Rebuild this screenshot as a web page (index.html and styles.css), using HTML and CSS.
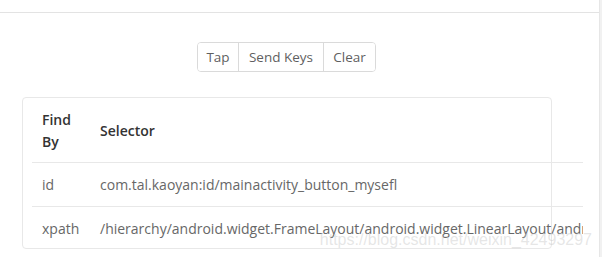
FILE: index.html
```html
<!DOCTYPE html>
<html>
<head>
<meta charset="utf-8">
<link rel="stylesheet" href="styles.css">
</head>
<body>
<div class="page">
  <div class="main">
    <div class="topbar"></div>
    <div class="actions">
      <div class="btn-group">
        <button class="btn btn-tap">Tap</button>
        <button class="btn btn-keys">Send Keys</button>
        <button class="btn btn-clear">Clear</button>
      </div>
    </div>
    <div class="card">
      <div class="table-wrap">
        <table class="sel-table">
          <thead>
            <tr><th class="col-by">Find By</th><th>Selector</th></tr>
          </thead>
          <tbody>
            <tr><td class="col-by">id</td><td>com.tal.kaoyan:id/mainactivity_button_mysefl</td></tr>
            <tr><td class="col-by">xpath</td><td>/hierarchy/android.widget.FrameLayout/android.widget.LinearLayout/android.widget.FrameLayout</td></tr>
          </tbody>
        </table>
      </div>
    </div>
    <div class="watermark">https://blog.csdn.net/weixin_42493297</div>
  </div>
  <div class="scroll-strip"></div>
</div>
</body>
</html>
```
FILE: styles.css
```css
html, body {
  margin: 0;
  padding: 0;
  background: #fff;
}
body {
  font-family: "Open Sans", "Noto Sans", sans-serif;
  color: #555;
  width: 602px;
  height: 257px;
  overflow: hidden;
}
.page {
  display: flex;
  height: 257px;
}
.main {
  position: relative;
  width: 599px;
  flex: none;
  overflow: hidden;
}
.scroll-strip {
  flex: 1;
  background: #f1f1f1;
  border-left: 1px solid #e6e6e6;
}
.topbar {
  height: 12px;
  border-bottom: 1px solid #e3e3e3;
}
.actions {
  display: flex;
  padding-top: 29px;
  padding-left: 197px;
}
.btn-group {
  display: flex;
  border: 1px solid #dadada;
  border-radius: 4px;
  height: 28px;
  overflow: hidden;
}
.btn {
  font-family: inherit;
  font-size: 13.5px;
  color: #5f5f5f;
  background: #fff;
  border: none;
  border-left: 1px solid #dadada;
  padding: 0;
  margin: 0;
  text-align: center;
  line-height: 28px;
}
.btn-tap { width: 40px; border-left: none; }
.btn-keys { width: 85px; }
.btn-clear { width: 52px; }
.card {
  margin: 25px 0 0 22px;
  width: 530px;
  height: 152px;
  border: 1px solid #e8e8e8;
  border-radius: 4px;
  padding: 0 0 0 9px;
  box-sizing: border-box;
}
.table-wrap {
  width: 551px;
  overflow: hidden;
}
.sel-table {
  border-collapse: collapse;
  width: 552px;
  font-size: 14px;
  white-space: nowrap;
}
.sel-table th, .sel-table td {
  text-align: left;
  padding: 0 10px;
  vertical-align: middle;
}
.sel-table th {
  font-weight: 600;
  color: #333;
  height: 62px;
  padding-top: 2px;
  line-height: 22px;
  white-space: normal;
  border-bottom: 1px solid #e8e8e8;
}
.sel-table td {
  height: 43px;
  color: #676767;
  border-top: 1px solid #e8e8e8;
  max-width: 400px;
  overflow: hidden;
}
.sel-table .col-by {
  width: 38px;
}
.watermark {
  position: absolute;
  right: 7px;
  top: 231px;
  font-family: "Liberation Sans", sans-serif;
  font-size: 16px;
  line-height: 18px;
  color: rgba(200, 200, 200, 0.45);
  white-space: nowrap;
}
```
